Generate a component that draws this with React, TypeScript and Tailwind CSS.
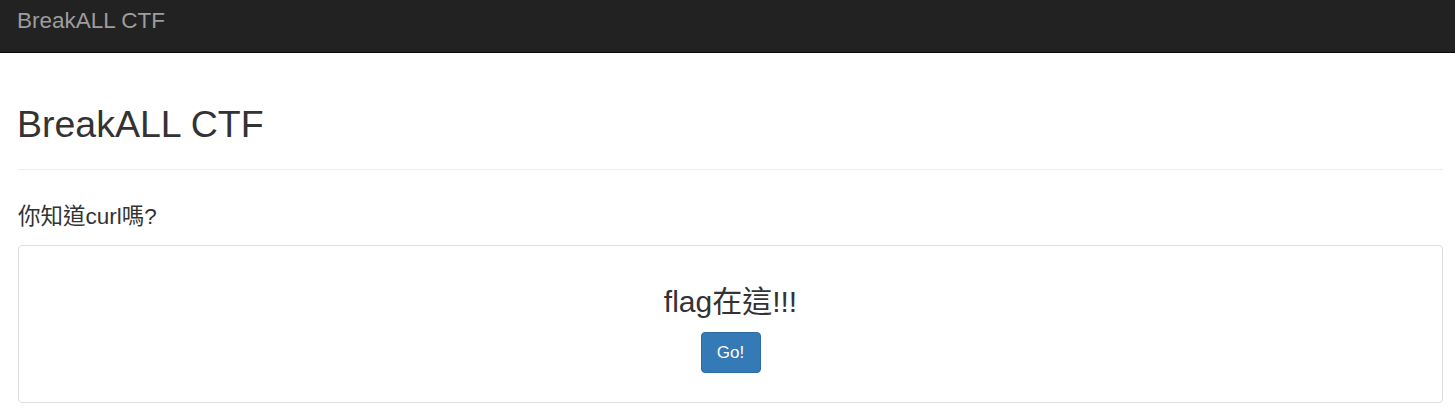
export default function App() {
  return (
    <div className="min-h-screen bg-white text-[#333] font-['Liberation_Sans','Noto_Sans_CJK_TC',sans-serif]">
      <nav className="h-[53px] bg-[#222] border-b border-[#080808] pl-[17px]">
        <a href="#" className="block pt-[9px] text-[22.5px] leading-[24px] text-[#9d9d9d]">
          BreakALL CTF
        </a>
      </nav>
      <div className="pl-[18px] pr-[12px]">
        <div className="mt-[51px] pb-[25px] border-b border-[#eee]">
          <h1 className="text-[37.5px] leading-[40px] -ml-px">BreakALL CTF</h1>
        </div>
        <h4 className="mt-[34px] mb-[15px] text-[22.5px] leading-[26px]">你知道curl嗎?</h4>
        <div className="border border-[#ddd] rounded-[4px] pt-[39px] pb-[29px] flex flex-col items-center">
          <h3 className="text-[30px] leading-[34px]">flag在這!!!</h3>
          <button className="mt-[13px] h-[41px] w-[60px] bg-[#337ab7] border border-[#2e6da4] rounded-[4px] text-white text-[17px]">
            Go!
          </button>
        </div>
      </div>
    </div>
  );
}
